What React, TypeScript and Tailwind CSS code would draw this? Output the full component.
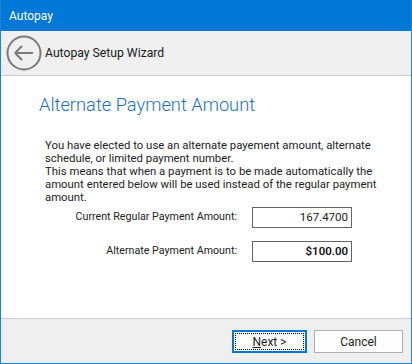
import React from "react";

export default function App() {
  const font = { fontFamily: "Roboto, 'Liberation Sans', sans-serif" };
  return (
    <div
      className="w-[412px] h-[364px] flex flex-col border-l border-r border-b border-[#1883d7] bg-white text-[#1e1e1e]"
      style={font}
    >
      <div className="h-[31px] shrink-0 bg-[#0078d7] flex items-center pl-[8px] text-white text-[12px]">
        Autopay
      </div>
      <div className="h-[45px] shrink-0 bg-[#efefef] border-b border-[#cccccc] flex items-center pl-[5px]">
        <svg width="36" height="36" viewBox="0 0 36 36" className="mt-[-1px]">
          <circle cx="18" cy="18" r="16.5" fill="none" stroke="#7a7a7a" strokeWidth="2" />
          <path d="M9 18 H27 M9 18 L16 11 M9 18 L16 25" fill="none" stroke="#7a7a7a" strokeWidth="2" strokeLinecap="butt" />
        </svg>
        <span className="ml-[3px] text-[12.2px] text-[#1a1a1a]">Autopay Setup Wizard</span>
      </div>
      <div className="h-[243px] shrink-0 border-b border-[#cccccc] flex flex-col">
        <div className="pl-[38px] pt-[18px] text-[18.3px] leading-[22px] text-[#1c6fc7] font-light">
          Alternate Payment Amount
        </div>
        <div className="pl-[44px] pr-[30px] mt-[23px] text-[11.35px] leading-[13px] text-[#222]">
          You have elected to use an alternate payement amount, alternate schedule, or limited payment number.
          <br />
          This means that when a payment is to be made automatically the amount entered below will be used instead of the regular payment amount.
        </div>
        <div className="grid grid-cols-[236px_100px] grid-rows-[21px_21px] gap-x-[15px] gap-y-[13px] mt-[3px] text-[10.7px] text-[#222] items-center">
          <div className="text-right">Current Regular Payment Amount:</div>
          <div className="h-[21px] border border-[#646464] flex items-center justify-end pr-[3px] text-[11.5px]">167.4700</div>
          <div className="text-right">Alternate Payment Amount:</div>
          <div className="h-[21px] border border-[#646464] flex items-center justify-end pr-[3px] text-[11.5px] font-medium text-black">$100.00</div>
        </div>
      </div>
      <div className="flex-1 bg-[#efefef] flex items-start pt-[11px] pl-[231px] gap-[7px] text-[12px] text-[#1e1e1e]">
        <div className="w-[75px] h-[23px] border-2 border-[#0078d7] bg-[#fdfdfd] p-[1px]">
          <div className="w-full h-full border border-dotted border-black flex items-center justify-center">
            <span><span className="underline">N</span>ext &gt;</span>
          </div>
        </div>
        <div className="w-[89px] h-[23px] border border-[#adadad] bg-[#fdfdfd] flex items-center justify-center">
          Cancel
        </div>
      </div>
    </div>
  );
}
